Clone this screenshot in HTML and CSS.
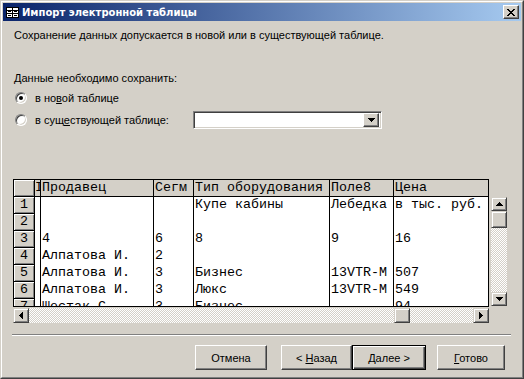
FILE: index.html
```html
<!DOCTYPE html>
<html lang="ru">
<head>
    <meta charset="UTF-8">
    <title>Импорт электронной таблицы</title>
    <link rel="stylesheet" href="styles.css">
</head>
<body>
<div class="window">
  <div class="frame">
    <div class="titlebar">
      <svg class="app-icon" width="13" height="11" viewBox="0 0 13 11" shape-rendering="crispEdges">
        <rect x="0" y="0" width="13" height="11" fill="#000"/>
        <rect x="1" y="1" width="11" height="9" fill="#fff"/>
        <rect x="1" y="3" width="11" height="1" fill="#000"/>
        <rect x="1" y="6" width="11" height="1" fill="#000"/>
        <rect x="6" y="1" width="1" height="9" fill="#000"/>
        <rect x="2" y="4" width="3" height="1" fill="#000"/>
        <rect x="8" y="4" width="3" height="1" fill="#000"/>
        <rect x="2" y="8" width="3" height="1" fill="#000"/>
        <rect x="8" y="8" width="3" height="1" fill="#000"/>
      </svg>
      <span class="title">Импорт электронной таблицы</span>
      <span class="close">
        <svg width="8" height="7" viewBox="0 0 8 7" shape-rendering="crispEdges">
          <path d="M0 0h2v1h-2zM6 0h2v1h-2zM1 1h2v1h-2zM5 1h2v1h-2zM2 2h4v1h-4zM3 3h2v1h-2zM2 4h4v1h-4zM1 5h2v1h-2zM5 5h2v1h-2zM0 6h2v1h-2zM6 6h2v1h-2z" fill="#000"/>
        </svg>
      </span>
    </div>

    <div class="content">
      <p class="intro">Сохранение данных допускается в новой или в существующей таблице.</p>
      <p class="label">Данные необходимо сохранить:</p>

      <div class="option option-new">
        <span class="radio checked"></span>
        <span class="option-text">в но<u>в</u>ой таблице</span>
      </div>
      <div class="option option-old">
        <span class="radio"></span>
        <span class="option-text wide">в сущ<u>е</u>ствующей таблице:</span>
        <div class="combo">
          <span class="combo-btn">
            <svg width="7" height="4" viewBox="0 0 7 4" shape-rendering="crispEdges"><path d="M0 0h7v1h-7zM1 1h5v1h-5zM2 2h3v1h-3zM3 3h1v1h-1z" fill="#000"/></svg>
          </span>
        </div>
      </div>

      <div class="grid">
        <div class="grid-top">
          <div class="sheet">
            <div class="row head">
              <div class="cell c0"></div>
              <div class="cell c1">I</div>
              <div class="cell c2">Продавец</div>
              <div class="cell c3">Сегм</div>
              <div class="cell c4">Тип оборудования</div>
              <div class="cell c5">Поле8</div>
              <div class="cell c6">Цена</div>
            </div>
            <div class="row">
              <div class="cell c0">1</div>
              <div class="cell c1"></div>
              <div class="cell c2"></div>
              <div class="cell c3"></div>
              <div class="cell c4">Купе кабины</div>
              <div class="cell c5">Лебедка</div>
              <div class="cell c6">в тыс. руб.</div>
            </div>
            <div class="row">
              <div class="cell c0">2</div>
              <div class="cell c1"></div>
              <div class="cell c2"></div>
              <div class="cell c3"></div>
              <div class="cell c4"></div>
              <div class="cell c5"></div>
              <div class="cell c6"></div>
            </div>
            <div class="row">
              <div class="cell c0">3</div>
              <div class="cell c1"></div>
              <div class="cell c2">4</div>
              <div class="cell c3">6</div>
              <div class="cell c4">8</div>
              <div class="cell c5">9</div>
              <div class="cell c6">16</div>
            </div>
            <div class="row">
              <div class="cell c0">4</div>
              <div class="cell c1"></div>
              <div class="cell c2">Алпатова И.</div>
              <div class="cell c3">2</div>
              <div class="cell c4"></div>
              <div class="cell c5"></div>
              <div class="cell c6"></div>
            </div>
            <div class="row">
              <div class="cell c0">5</div>
              <div class="cell c1"></div>
              <div class="cell c2">Алпатова И.</div>
              <div class="cell c3">3</div>
              <div class="cell c4">Бизнес</div>
              <div class="cell c5">13VTR-M</div>
              <div class="cell c6">507</div>
            </div>
            <div class="row">
              <div class="cell c0">6</div>
              <div class="cell c1"></div>
              <div class="cell c2">Алпатова И.</div>
              <div class="cell c3">3</div>
              <div class="cell c4">Люкс</div>
              <div class="cell c5">13VTR-M</div>
              <div class="cell c6">549</div>
            </div>
            <div class="row">
              <div class="cell c0">7</div>
              <div class="cell c1"></div>
              <div class="cell c2">Шестак С.</div>
              <div class="cell c3">3</div>
              <div class="cell c4">Бизнес</div>
              <div class="cell c5"></div>
              <div class="cell c6">94</div>
            </div>
          </div>

          <div class="vscroll">
            <span class="sb-btn vbtn">
              <svg width="7" height="4" viewBox="0 0 7 4" shape-rendering="crispEdges"><path d="M3 0h1v1h-1zM2 1h3v1h-3zM1 2h5v1h-5zM0 3h7v1h-7z" fill="#000"/></svg>
            </span>
            <span class="sb-btn vthumb"></span>
            <span class="track"></span>
            <span class="sb-btn vbtn">
              <svg width="7" height="4" viewBox="0 0 7 4" shape-rendering="crispEdges"><path d="M0 0h7v1h-7zM1 1h5v1h-5zM2 2h3v1h-3zM3 3h1v1h-1z" fill="#000"/></svg>
            </span>
          </div>
        </div>

        <div class="hscroll">
          <span class="sb-btn hbtn">
            <svg width="4" height="7" viewBox="0 0 4 7" shape-rendering="crispEdges"><path d="M3 0h1v7h-1zM2 1h1v5h-1zM1 2h1v3h-1zM0 3h1v1h-1z" fill="#000"/></svg>
          </span>
          <span class="track htrack"><span class="sb-btn hthumb"></span></span>
          <span class="sb-btn hbtn">
            <svg width="4" height="7" viewBox="0 0 4 7" shape-rendering="crispEdges"><path d="M0 0h1v7h-1zM1 1h1v5h-1zM2 2h1v3h-1zM3 3h1v1h-1z" fill="#000"/></svg>
          </span>
        </div>
      </div>

      <div class="separator"></div>

      <div class="buttons">
        <span class="btn cancel"><span>Отмена</span></span>
        <span class="btn back"><span>&lt; <u>Н</u>азад</span></span>
        <span class="btn next default"><span><u>Д</u>алее &gt;</span></span>
        <span class="btn finish"><span><u>Г</u>отово</span></span>
      </div>
    </div>
  </div>
</div>
</body>
</html>
```

FILE: styles.css
```css
body {
    margin: 0;
    font-family: "Liberation Sans", Arial, sans-serif;
    font-size: 11px;
    color: #000;
    background: #d4d0c8;
}
.window {
    width: 524px;
    height: 379px;
    box-sizing: border-box;
    border: 1px solid;
    border-color: #d4d0c8 #404040 #404040 #d4d0c8;
    background: #d4d0c8;
}
.frame {
    height: 100%;
    box-sizing: border-box;
    border: 1px solid;
    border-color: #fff #808080 #808080 #fff;
    padding: 1px;
}

/* title bar */
.titlebar {
    height: 18px;
    display: flex;
    align-items: center;
    padding-left: 3px;
    padding-right: 2px;
    background: linear-gradient(to right, #0a246a, #a6caf0);
}
.app-icon {
    display: block;
    margin-right: 3px;
}
.title {
    color: #fff;
    font-family: "DejaVu Sans", sans-serif;
    font-weight: bold;
    font-size: 10px;
}
.close {
    margin-left: auto;
    width: 16px;
    height: 14px;
    box-sizing: border-box;
    display: flex;
    align-items: center;
    justify-content: center;
    background: #d4d0c8;
    border: 1px solid;
    border-color: #fff #404040 #404040 #fff;
    box-shadow: inset -1px -1px #808080;
}

/* content */
.content {
    padding-left: 9px;
}
.intro {
    margin: 8px 0 0 2px;
    line-height: 13px;
}
.label {
    margin: 30px 0 0 2px;
    line-height: 13px;
}
.option {
    display: flex;
    align-items: center;
}
.option-new {
    margin-top: 6px;
    height: 13px;
}
.option-old {
    margin-top: 7px;
    height: 18px;
}
.radio {
    position: relative;
    width: 12px;
    height: 12px;
    box-sizing: border-box;
    margin-left: 3px;
    margin-right: 8px;
    border-radius: 50%;
    border: 1px solid;
    border-color: #808080 #fff #fff #808080;
    box-shadow: inset 1px 1px #404040, inset -1px -1px #d4d0c8;
    background: #fff;
}
.radio.checked::after {
    content: "";
    position: absolute;
    left: 3px;
    top: 3px;
    width: 4px;
    height: 4px;
    border-radius: 50%;
    background: #000;
}
.option-text.wide {
    width: 158px;
}
.combo {
    width: 189px;
    height: 18px;
    box-sizing: border-box;
    border: 1px solid;
    border-color: #808080 #fff #fff #808080;
    box-shadow: inset 1px 1px #404040, inset -1px -1px #d4d0c8;
    background: #fff;
    display: flex;
    justify-content: flex-end;
    padding: 1px 2px 1px 1px;
}
.combo-btn {
    width: 16px;
    height: 14px;
    box-sizing: border-box;
    display: flex;
    align-items: center;
    justify-content: center;
    background: #d4d0c8;
    border: 1px solid;
    border-color: #fff #404040 #404040 #fff;
    box-shadow: inset -1px -1px #808080;
}

/* data grid */
.grid {
    margin-top: 50px;
    margin-left: 1px;
}
.grid-top {
    display: flex;
    align-items: flex-start;
}
.sheet {
    width: 476px;
    height: 128px;
    box-sizing: border-box;
    border: 1px solid #000;
    background: #fff;
    overflow: hidden;
    font-family: "Liberation Mono", "Courier New", monospace;
    font-size: 13.333px;
}
.row {
    display: flex;
    height: 17px;
}
.cell {
    box-sizing: border-box;
    height: 17px;
    line-height: 16px;
    padding-left: 1px;
    border-right: 1px solid #000;
    white-space: nowrap;
    overflow: hidden;
}
.row.head .cell {
    background: #d4d0c8;
    border-bottom: 1px solid #000;
}
.c0 {
    width: 21px;
    background: #d4d0c8;
    text-align: center;
    padding-left: 0;
    border-bottom: 1px solid #000;
    box-shadow: inset 1px 1px #fff, inset -1px -1px #808080;
}
.c1 { width: 6px; padding-left: 0; }
.c2 { width: 113px; }
.c3 { width: 40px; }
.c4 { width: 136px; }
.c5 { width: 64px; }
.c6 { width: 94px; border-right: none; }

/* scrollbars */
.sb-btn {
    display: flex;
    align-items: center;
    justify-content: center;
    box-sizing: border-box;
    background: #d4d0c8;
    border: 1px solid;
    border-color: #d4d0c8 #404040 #404040 #d4d0c8;
    box-shadow: inset 1px 1px #fff, inset -1px -1px #808080;
}
.track {
    display: block;
    background: repeating-conic-gradient(#fff 0 25%, #d4d0c8 0 50%) 0 0 / 2px 2px;
}
.vscroll {
    margin-top: 18px;
    margin-left: 2px;
    width: 16px;
    height: 109px;
    display: flex;
    flex-direction: column;
}
.vbtn {
    height: 14px;
}
.vthumb {
    height: 17px;
}
.vscroll .track {
    flex: 1;
}
.hscroll {
    margin-top: 1px;
    width: 476px;
    height: 15px;
    display: flex;
}
.hbtn {
    width: 16px;
}
.htrack {
    flex: 1;
    display: flex;
}
.hthumb {
    width: 16px;
    margin-left: 365px;
}

/* bottom */
.separator {
    margin-top: 11px;
    margin-right: 10px;
    height: 0;
    border-top: 1px solid #808080;
    border-bottom: 1px solid #fff;
}
.buttons {
    display: flex;
    margin-top: 9px;
    padding-left: 183px;
}
.btn {
    height: 25px;
    box-sizing: border-box;
    display: flex;
    align-items: center;
    justify-content: center;
    background: #d4d0c8;
    border: 1px solid;
    border-color: #fff #404040 #404040 #fff;
    box-shadow: inset -1px -1px #808080;
    white-space: pre;
}
.cancel { width: 72px; margin-right: 14px; }
.back { width: 71px; }
.next { width: 74px; margin-right: 11px; }
.finish { width: 68px; }
.btn.default {
    border-color: #000;
    box-shadow: inset 1px 1px #fff, inset -1px -1px #404040, inset -2px -2px #808080;
}
```
